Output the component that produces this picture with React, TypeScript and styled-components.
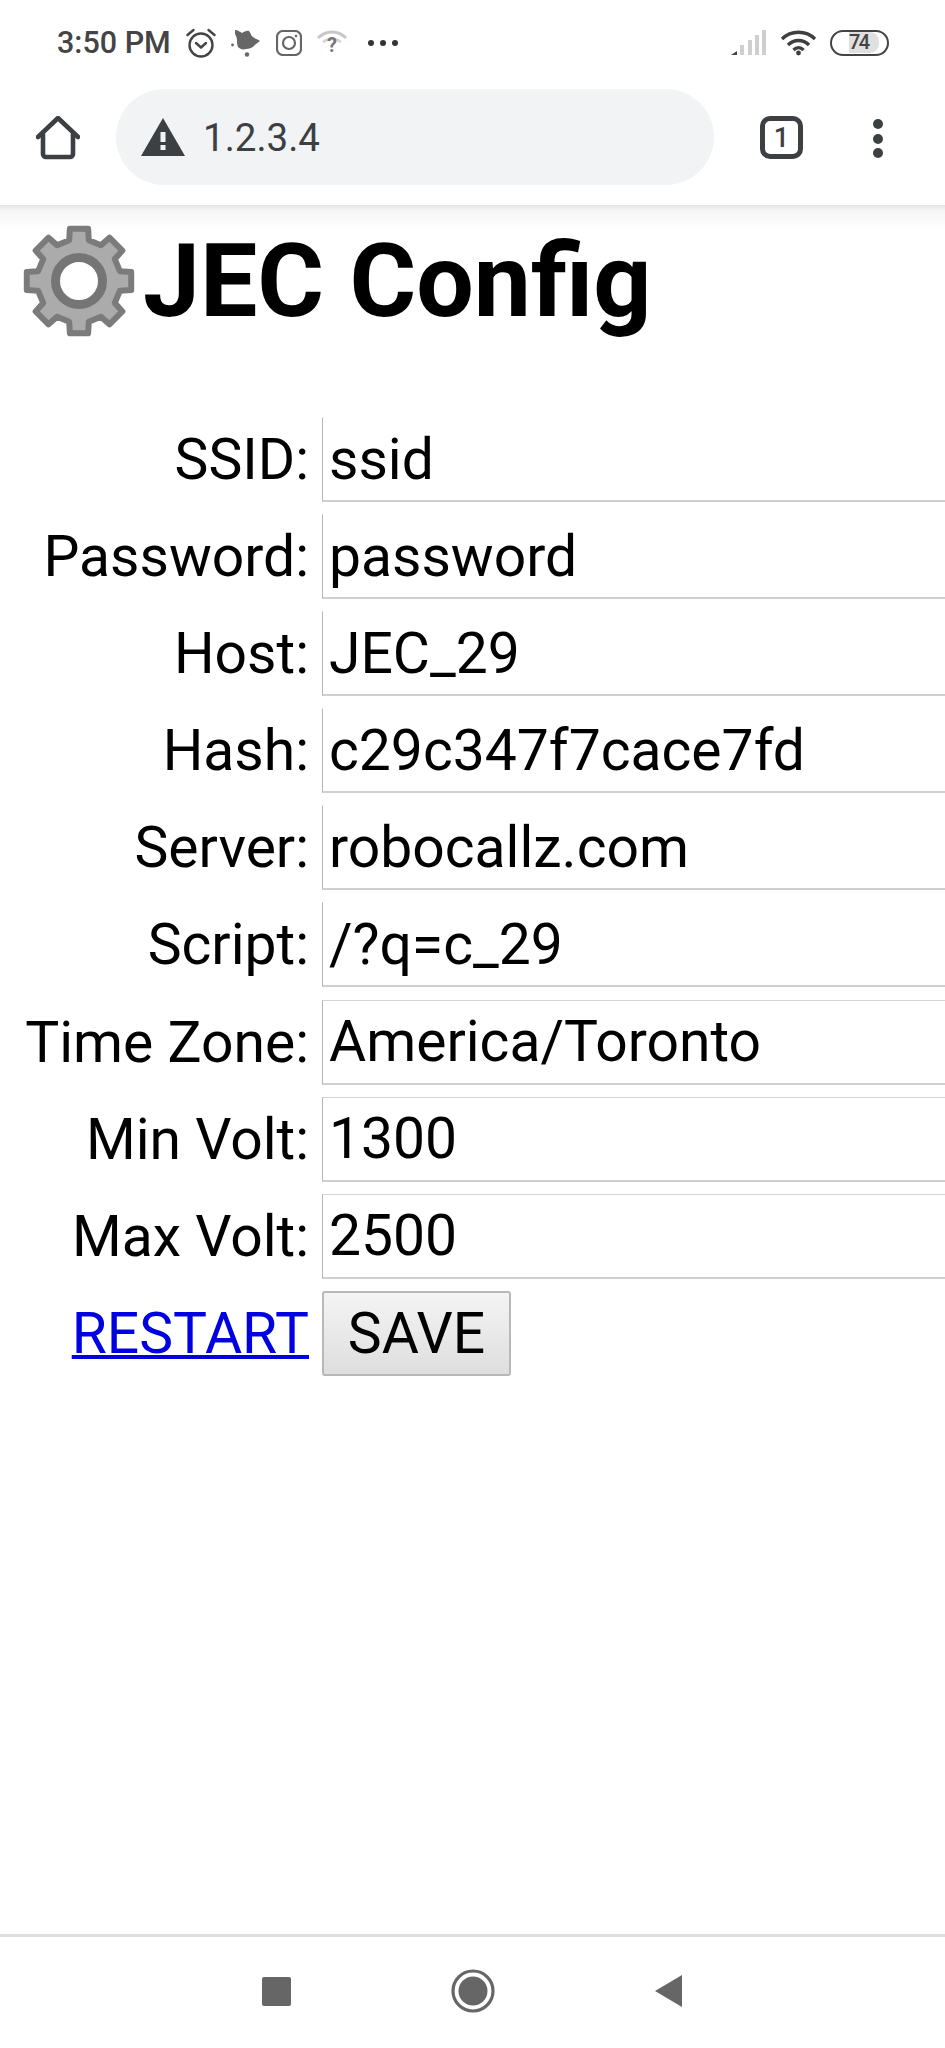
import React from "react";
import styled, { createGlobalStyle } from "styled-components";

const Global = createGlobalStyle`
  html, body { margin: 0; padding: 0; background: #fff; }
  body { font-family: Roboto, "Liberation Sans", sans-serif; }
`;

const Page = styled.div`
  width: 945px;
  height: 2048px;
  display: flex;
  flex-direction: column;
  overflow: hidden;
  background: #fff;
`;

const StatusBar = styled.div`
  height: 85px;
  flex: none;
  display: flex;
  align-items: center;
  padding: 0 56px 0 57px;
  color: #444;
`;

const Time = styled.span`
  font-size: 30.5px;
  font-weight: 500;
  margin-right: 15px;
  white-space: nowrap;
`;

const StatusIcons = styled.div`
  display: flex;
  align-items: center;
  gap: 15px;
`;

const EllipsisSlot = styled.div`
  margin-left: 5px;
  display: flex;
`;

const StatusRight = styled.div`
  margin-left: auto;
  display: flex;
  align-items: center;
  gap: 13px;
`;

const Battery = styled.div`
  width: 59px;
  height: 26px;
  box-sizing: border-box;
  border: 2.5px solid #444;
  border-radius: 13px;
  display: flex;
  align-items: center;
  justify-content: center;
  font-size: 20px;
  font-weight: 500;
  letter-spacing: -1.5px;
  color: #444;
  padding-left: 2px;
`;

const BatteryFill = styled.span`
  display: block;
  background: #e0e0e0;
  width: 30px;
  margin-left: 13px;
  margin-right: 6px;
  border-radius: 0 9px 9px 0;
  line-height: 21px;
`;

const Toolbar = styled.div`
  height: 120px;
  flex: none;
  box-sizing: border-box;
  padding: 4px 45px 0 36px;
  display: flex;
  align-items: flex-start;
  background: #fff;
`;

const HomeSlot = styled.div`
  width: 44px;
  margin-top: 27px;
  margin-right: 36px;
  height: 44px;
`;

const AddressPill = styled.div`
  width: 598px;
  height: 96px;
  border-radius: 48px;
  background: #f1f3f4;
  display: flex;
  align-items: center;
  padding-left: 25px;
  box-sizing: border-box;
  gap: 18px;
`;

const Url = styled.span`
  font-size: 38.5px;
  color: #3c4043;
`;

const TabCount = styled.div`
  width: 43px;
  height: 43px;
  margin-top: 27px;
  margin-left: 46px;
  box-sizing: border-box;
  border: 5px solid #3c4043;
  border-radius: 10px;
  font-size: 27px;
  font-weight: 500;
  color: #3c4043;
  display: flex;
  align-items: center;
  justify-content: center;
`;

const MenuDots = styled.div`
  margin-top: 30px;
  margin-left: 70px;
  display: flex;
  flex-direction: column;
  gap: 4.5px;
`;

const MenuDot = styled.span`
  width: 10px;
  height: 10px;
  border-radius: 50%;
  background: #3c4043;
`;

const Content = styled.main`
  flex: 1;
  min-height: 0;
  display: flex;
  flex-direction: column;
  background: linear-gradient(#e4e4e4, #f5f5f5 5px, #fff 24px);
`;

const Title = styled.h1`
  margin: 0;
  padding: 20px 0 0 23px;
  height: 113px;
  display: flex;
  align-items: flex-start;
  gap: 8px;
  font-size: 102px;
  line-height: 113px;
  font-weight: 700;
  color: #000;
`;

const Form = styled.form`
  margin-top: 79px;
  display: grid;
  grid-template-columns: 309px 700px;
  column-gap: 13px;
  row-gap: 12.1px;
  font-size: 57px;
`;

const Label = styled.label`
  text-align: right;
  line-height: 85px;
  height: 85px;
  color: #000;
  white-space: nowrap;
`;

const Field = styled.input<{ $topLine?: boolean }>`
  width: 100%;
  height: 85px;
  box-sizing: border-box;
  border: none;
  border-left: 1px solid #b5b5b5;
  border-bottom: 2px solid #cfcfcf;
  border-top: 1px solid ${(p) => (p.$topLine ? "#d4d4d4" : "transparent")};
  padding: 0 6px;
  margin: 0;
  font: inherit;
  color: #000;
  background: #fff;
  outline: none;
  border-radius: 0;
`;

const RestartCell = styled.div`
  text-align: right;
  line-height: 85px;
  height: 85px;
`;

const RestartLink = styled.a`
  color: #0000e0;
  text-decoration: underline;
  text-decoration-thickness: 4px;
`;

const SaveButton = styled.button`
  justify-self: start;
  width: 189px;
  height: 85px;
  box-sizing: border-box;
  border: 2px solid #b8b8b8;
  border-radius: 3px;
  padding: 0;
  font: inherit;
  color: #000;
  background: linear-gradient(#f4f4f4, #dedede);
`;

const NavBar = styled.nav`
  height: 114px;
  flex: none;
  box-sizing: border-box;
  border-top: 3px solid #dedede;
  display: flex;
  align-items: center;
  padding: 0 0 3px 262px;
  gap: 160px;
`;

const fields: [string, string][] = [
  ["SSID:", "ssid"],
  ["Password:", "password"],
  ["Host:", "JEC_29"],
  ["Hash:", "c29c347f7cace7fd"],
  ["Server:", "robocallz.com"],
  ["Script:", "/?q=c_29"],
  ["Time Zone:", "America/Toronto"],
  ["Min Volt:", "1300"],
  ["Max Volt:", "2500"],
];

function gearPath(): string {
  const pts: string[] = [];
  const teeth = 8;
  const rOut = 53;
  const rIn = 42;
  for (let i = 0; i < teeth; i++) {
    const a = (i * 2 * Math.PI) / teeth - Math.PI / 2;
    const step = (2 * Math.PI) / teeth;
    const p = (r: number, t: number) =>
      `${(56 + r * Math.cos(t)).toFixed(2)} ${(56 + r * Math.sin(t)).toFixed(2)}`;
    pts.push(`${i === 0 ? "M" : "L"}${p(rIn, a - step * 0.3)}`);
    pts.push(`L${p(rOut, a - step * 0.22)}`);
    pts.push(`L${p(rOut, a + step * 0.22)}`);
    pts.push(`L${p(rIn, a + step * 0.3)}`);
  }
  return pts.join(" ") + " Z";
}

const Gear = () => (
  <svg width="112" height="112" viewBox="0 0 112 112" style={{ flex: "none" }}>
    <path d={gearPath()} fill="#ababab" stroke="#7b7b7b" strokeWidth="6" strokeLinejoin="round" />
    <circle cx="56" cy="56" r="23.5" fill="#fff" stroke="#757575" strokeWidth="9" />
  </svg>
);

const Alarm = () => (
  <svg width="30" height="30" viewBox="0 0 30 30" fill="none" stroke="#444" strokeWidth="2.4" strokeLinecap="round" strokeLinejoin="round">
    <circle cx="15" cy="17" r="11.5" />
    <path d="M10 15l5 4.5 5-4.5" />
    <path d="M1.5 7l6-5M28.5 7l-6-5" />
  </svg>
);

const BirdBlob = () => (
  <svg width="30" height="28" viewBox="0 0 30 28">
    <path d="M4 1c3 0 5 2 7 3 2-1 5-3 7-2 2 2 2 5 4 6 2 2 6 3 7 4-2 2-5 3-6 5-2 2-5 3-8 3-3 1-6 0-8-2-1-2-1-5-1-7 0-2-1-4-2-6 0-1 0-3 0-4z" fill="#666" />
    <circle cx="1.5" cy="16" r="1.4" fill="#666" />
    <circle cx="16" cy="25.5" r="2.2" fill="#666" />
  </svg>
);

const Insta = () => (
  <svg width="26" height="26" viewBox="0 0 26 26" fill="none" stroke="#666" strokeWidth="2.2">
    <rect x="1" y="1" width="24" height="24" rx="6" />
    <circle cx="13" cy="13" r="6" />
    <circle cx="20" cy="6" r="1.3" fill="#666" stroke="none" />
  </svg>
);

const WifiQuestion = () => (
  <svg width="30" height="30" viewBox="0 0 30 30">
    <path d="M1 10c8-8 20-8 28 0" fill="none" stroke="#c8c8c8" strokeWidth="3" />
    <path d="M6 14c5-4 13-4 18 0" fill="none" stroke="#d4d4d4" strokeWidth="2.5" />
    <text x="15" y="24" textAnchor="middle" fontFamily="Roboto, sans-serif" fontWeight="700" fontSize="20" fill="#777">?</text>
  </svg>
);

const Ellipsis = () => (
  <svg width="32" height="8" viewBox="0 0 32 8" fill="#333">
    <circle cx="4" cy="4" r="3" />
    <circle cx="16" cy="4" r="3" />
    <circle cx="28" cy="4" r="3" />
  </svg>
);

const Signal = () => (
  <svg width="36" height="26" viewBox="0 0 36 26">
    <path d="M0 25l6-4v4z" fill="#444" />
    <rect x="9" y="15" width="4" height="10" fill="#cfcfcf" />
    <rect x="17" y="10" width="4" height="15" fill="#cfcfcf" />
    <rect x="24" y="5" width="4" height="20" fill="#cfcfcf" />
    <rect x="31" y="0" width="4" height="25" fill="#cfcfcf" />
  </svg>
);

const Wifi = () => (
  <svg width="37" height="26" viewBox="0 0 37 26" fill="none" stroke="#3f3f3f" strokeWidth="3.4">
    <path d="M2 9c9-9 24-9 33 0" />
    <path d="M8 15c6-6 15-6 21 0" />
    <path d="M13.5 20c3-3 7-3 10 0" />
    <circle cx="18.5" cy="23" r="2.4" fill="#3f3f3f" stroke="none" />
  </svg>
);

const Home = () => (
  <svg width="44" height="44" viewBox="0 0 44 44" fill="none" stroke="#3c4043" strokeWidth="4.6" strokeLinejoin="round" strokeLinecap="round">
    <path d="M2 21L22 2l20 19" />
    <path d="M7 18v20a3 3 0 0 0 3 3h24a3 3 0 0 0 3-3V18" />
  </svg>
);

const Warning = () => (
  <svg width="44" height="38" viewBox="0 0 44 38">
    <path d="M22 0l22 38H0z" fill="#3c4043" />
    <rect x="19.5" y="14" width="5" height="10" fill="#f1f3f4" />
    <rect x="19.5" y="27" width="5" height="5" fill="#f1f3f4" />
  </svg>
);

const NavSquare = () => (
  <svg width="29" height="29" viewBox="0 0 29 29">
    <rect width="29" height="29" rx="2" fill="#666" />
  </svg>
);

const NavCircle = () => (
  <svg width="44" height="44" viewBox="0 0 44 44">
    <circle cx="22" cy="22" r="20" fill="none" stroke="#666" strokeWidth="3.2" />
    <circle cx="22" cy="22" r="14.5" fill="#666" />
  </svg>
);

const NavBack = () => (
  <svg width="27" height="32" viewBox="0 0 27 32">
    <path d="M27 0v32L0 16z" fill="#666" />
  </svg>
);

export default function App() {
  return (
    <>
      <Global />
      <Page>
        <StatusBar>
          <Time>3:50 PM</Time>
          <StatusIcons>
            <Alarm />
            <BirdBlob />
            <Insta />
            <WifiQuestion />
            <EllipsisSlot>
              <Ellipsis />
            </EllipsisSlot>
          </StatusIcons>
          <StatusRight>
            <Signal />
            <Wifi />
            <Battery>
              <BatteryFill>74</BatteryFill>
            </Battery>
          </StatusRight>
        </StatusBar>
        <Toolbar>
          <HomeSlot>
            <Home />
          </HomeSlot>
          <AddressPill>
            <Warning />
            <Url>1.2.3.4</Url>
          </AddressPill>
          <TabCount>1</TabCount>
          <MenuDots>
            <MenuDot />
            <MenuDot />
            <MenuDot />
          </MenuDots>
        </Toolbar>
        <Content>
          <Title>
            <Gear />
            JEC Config
          </Title>
          <Form>
            {fields.map(([label, value], i) => (
              <React.Fragment key={label}>
                <Label>{label}</Label>
                <Field defaultValue={value} $topLine={i >= 6} />
              </React.Fragment>
            ))}
            <RestartCell>
              <RestartLink href="#">RESTART</RestartLink>
            </RestartCell>
            <SaveButton type="button">SAVE</SaveButton>
          </Form>
        </Content>
        <NavBar>
          <NavSquare />
          <NavCircle />
          <NavBack />
        </NavBar>
      </Page>
    </>
  );
}
